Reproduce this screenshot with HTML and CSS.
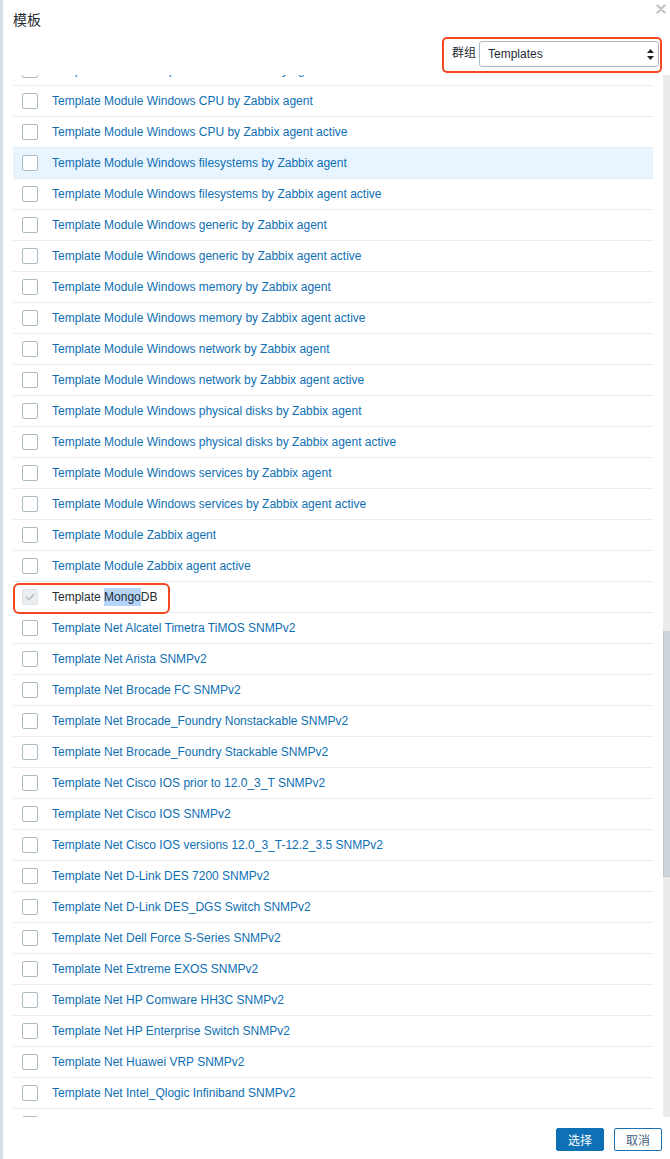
FILE: index.html
```html
<!DOCTYPE html>
<html lang="zh">
<head>
<meta charset="utf-8">
<title>模板</title>
<link rel="stylesheet" href="styles.css">
</head>
<body>
<div class="edge"></div>
<div class="dialog">
  <div class="head">
    <h4 class="title">模板</h4>
    <span class="close" aria-label="close">
      <svg width="10" height="10" viewBox="0 0 10 10"><path d="M1.5 1.5 L8.5 8.5 M8.5 1.5 L1.5 8.5" stroke="#c4c4c4" stroke-width="2.4" stroke-linecap="round"/></svg>
    </span>
  </div>
  <div class="filter">
    <div class="mark-box">
      <span class="filter-label">群组</span>
      <div class="select">
        <span>Templates</span>
        <svg class="arrows" width="7" height="11" viewBox="0 0 7 11"><path d="M3.5 0 L7 4 L0 4 Z M3.5 11 L7 7 L0 7 Z" fill="#222"/></svg>
      </div>
    </div>
  </div>
  <div class="body">
    <div class="viewport">
      <ul class="list">
        <li class="row"><span class="cb"></span><a>Template Module Ubiquiti AirOS SNMPv1 by agent</a></li>
        <li class="row"><span class="cb"></span><a>Template Module Windows CPU by Zabbix agent</a></li>
        <li class="row"><span class="cb"></span><a>Template Module Windows CPU by Zabbix agent active</a></li>
        <li class="row hover"><span class="cb"></span><a>Template Module Windows filesystems by Zabbix agent</a></li>
        <li class="row"><span class="cb"></span><a>Template Module Windows filesystems by Zabbix agent active</a></li>
        <li class="row"><span class="cb"></span><a>Template Module Windows generic by Zabbix agent</a></li>
        <li class="row"><span class="cb"></span><a>Template Module Windows generic by Zabbix agent active</a></li>
        <li class="row"><span class="cb"></span><a>Template Module Windows memory by Zabbix agent</a></li>
        <li class="row"><span class="cb"></span><a>Template Module Windows memory by Zabbix agent active</a></li>
        <li class="row"><span class="cb"></span><a>Template Module Windows network by Zabbix agent</a></li>
        <li class="row"><span class="cb"></span><a>Template Module Windows network by Zabbix agent active</a></li>
        <li class="row"><span class="cb"></span><a>Template Module Windows physical disks by Zabbix agent</a></li>
        <li class="row"><span class="cb"></span><a>Template Module Windows physical disks by Zabbix agent active</a></li>
        <li class="row"><span class="cb"></span><a>Template Module Windows services by Zabbix agent</a></li>
        <li class="row"><span class="cb"></span><a>Template Module Windows services by Zabbix agent active</a></li>
        <li class="row"><span class="cb"></span><a>Template Module Zabbix agent</a></li>
        <li class="row"><span class="cb"></span><a>Template Module Zabbix agent active</a></li>
        <li class="row checked">
          <span class="cb cb-on"><svg width="10" height="8" viewBox="0 0 10 8"><path d="M1 4 L4 6.5 L9 1.2" fill="none" stroke="#b2bcc4" stroke-width="1.6"/></svg></span>
          <span class="plain">Template <span class="sel">Mongo</span>DB</span>
          <span class="row-mark"></span>
        </li>
        <li class="row"><span class="cb"></span><a>Template Net Alcatel Timetra TiMOS SNMPv2</a></li>
        <li class="row"><span class="cb"></span><a>Template Net Arista SNMPv2</a></li>
        <li class="row"><span class="cb"></span><a>Template Net Brocade FC SNMPv2</a></li>
        <li class="row"><span class="cb"></span><a>Template Net Brocade_Foundry Nonstackable SNMPv2</a></li>
        <li class="row"><span class="cb"></span><a>Template Net Brocade_Foundry Stackable SNMPv2</a></li>
        <li class="row"><span class="cb"></span><a>Template Net Cisco IOS prior to 12.0_3_T SNMPv2</a></li>
        <li class="row"><span class="cb"></span><a>Template Net Cisco IOS SNMPv2</a></li>
        <li class="row"><span class="cb"></span><a>Template Net Cisco IOS versions 12.0_3_T-12.2_3.5 SNMPv2</a></li>
        <li class="row"><span class="cb"></span><a>Template Net D-Link DES 7200 SNMPv2</a></li>
        <li class="row"><span class="cb"></span><a>Template Net D-Link DES_DGS Switch SNMPv2</a></li>
        <li class="row"><span class="cb"></span><a>Template Net Dell Force S-Series SNMPv2</a></li>
        <li class="row"><span class="cb"></span><a>Template Net Extreme EXOS SNMPv2</a></li>
        <li class="row"><span class="cb"></span><a>Template Net HP Comware HH3C SNMPv2</a></li>
        <li class="row"><span class="cb"></span><a>Template Net HP Enterprise Switch SNMPv2</a></li>
        <li class="row"><span class="cb"></span><a>Template Net Huawei VRP SNMPv2</a></li>
        <li class="row"><span class="cb"></span><a>Template Net Intel_Qlogic Infiniband SNMPv2</a></li>
        <li class="row"><span class="cb"></span><a>Template Net Juniper SNMPv2</a></li>
      </ul>
    </div>
    <div class="scrolltrack"><div class="thumb"></div></div>
  </div>
  <div class="foot">
    <button class="btn btn-primary">选择</button>
    <button class="btn btn-alt">取消</button>
  </div>
</div>
</body>
</html>
```

FILE: styles.css
```css
* { box-sizing: border-box; }
html, body {
  margin: 0;
  padding: 0;
  height: 1159px;
  overflow: hidden;
  background: #ffffff;
}
body {
  display: flex;
  font-family: "Liberation Sans", Arial, "Noto Sans CJK SC", sans-serif;
  font-size: 12px;
  color: #1f2c33;
}
.edge {
  width: 3px;
  flex: none;
  background: #d6dde3;
}
.dialog {
  flex: 1;
  display: flex;
  flex-direction: column;
  height: 1159px;
  position: relative;
  background: #fff;
}
.head {
  height: 37px;
  padding: 10px 0 0 10px;
  flex: none;
}
.title {
  margin: 0;
  font-size: 14px;
  line-height: 20px;
  font-weight: normal;
  color: #1f2c33;
  font-family: "Liberation Sans", Arial, "Noto Sans CJK SC", sans-serif;
}
.close {
  position: absolute;
  right: 4px;
  top: 4px;
  width: 10px;
  height: 10px;
  display: block;
}
.close svg { display: block; }
.filter {
  height: 36px;
  flex: none;
  display: flex;
  justify-content: flex-end;
  padding-right: 8px;
}
.mark-box {
  border: 2px solid #f4471f;
  border-radius: 5px;
  height: 36px;
  display: flex;
  align-items: flex-start;
  padding: 2px 1px 0 8px;
  gap: 3px;
}
.filter-label {
  line-height: 25px;
  font-size: 12px;
  color: #1f2c33;
}
.select {
  width: 180px;
  height: 26px;
  border: 1px solid #acbbc2;
  border-radius: 3px;
  display: flex;
  align-items: center;
  justify-content: space-between;
  padding: 0 4px 0 8px;
  font-size: 12px;
  color: #1f2c33;
  background: #fff;
}
.arrows { display: block; }
.body {
  margin-top: 2px;
  height: 1042px;
  flex: none;
  display: flex;
  gap: 10px;
  padding-left: 10px;
}
.viewport {
  width: 640px;
  height: 1042px;
  overflow: hidden;
  padding-top: 1px;
}
.list {
  list-style: none;
  margin: -21px 0 0 0;
  padding: 0;
}
.row {
  position: relative;
  height: 31px;
  border-bottom: 1px solid #ebeef0;
  display: flex;
  align-items: center;
  padding-left: 9px;
  gap: 14px;
}
.row.hover { background: #e8f5ff; }
.row a {
  color: #0f6fb3;
  text-decoration: none;
  white-space: nowrap;
}
.cb {
  width: 16px;
  height: 16px;
  flex: none;
  border: 1px solid #acbbc2;
  border-radius: 2px;
  background: #fff;
  display: flex;
  align-items: center;
  justify-content: center;
}
.cb-on {
  background: #ebeef0;
  border-color: #dde3e7;
}
.cb-on svg { display: block; }
.plain { color: #1f2c33; white-space: nowrap; }
.sel { background: #b5d5fb; padding: 2px 0; }
.row-mark {
  position: absolute;
  left: 0;
  top: 1px;
  width: 157px;
  height: 31px;
  border: 2px solid #f4471f;
  border-radius: 6px;
  pointer-events: none;
}
.scrolltrack {
  width: 7px;
  height: 1042px;
  background: #ebebeb;
  flex: none;
}
.thumb {
  margin-top: 556px;
  height: 246px;
  background: #cdd5dc;
  border-left: 1px solid #bfc8cf;
  border-bottom: 1px solid #bfc8cf;
}
.foot {
  flex: 1;
  display: flex;
  justify-content: flex-end;
  align-items: flex-start;
  padding: 11px 8px 0 0;
  gap: 10px;
}
.btn {
  height: 23px;
  width: 48px;
  border-radius: 2px;
  font-family: "Liberation Sans", Arial, "Noto Sans CJK SC", sans-serif;
  font-size: 12px;
  padding: 0;
  cursor: pointer;
}
.btn-primary {
  background: #0e70b5;
  border: 1px solid #0e70b5;
  color: #fff;
}
.btn-alt {
  background: #fff;
  border: 1px solid #1a72b3;
  color: #45627e;
}
```
